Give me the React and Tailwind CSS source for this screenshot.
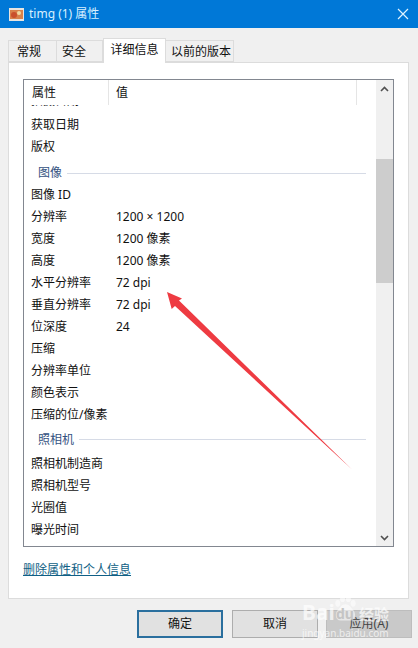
import React from "react";

const font = "font-['Noto_Sans','Noto_Sans_CJK_SC',sans-serif]";

const tabs = [
    { label: "常规", className: "w-[49px] pl-[8px] border-l" },
    { label: "安全", className: "w-[46px] pl-[5px]" },
    { label: "详细信息", w: "w-[63px]", active: true },
    { label: "以前的版本", className: "w-[68px] pl-[5px]" },
];

const rowsA = [
    ["获取日期"],
    ["版权"],
];
const rowsB = [
    ["图像 ID"],
    ["分辨率", "1200 × 1200"],
    ["宽度", "1200 像素"],
    ["高度", "1200 像素"],
    ["水平分辨率", "72 dpi"],
    ["垂直分辨率", "72 dpi"],
    ["位深度", "24"],
    ["压缩"],
    ["分辨率单位"],
    ["颜色表示"],
    ["压缩的位/像素"],
];
const rowsC = [
    ["照相机制造商"],
    ["照相机型号"],
    ["光圈值"],
    ["曝光时间"],
];

function Row({ name, value }) {
    return (
        <div className="flex h-[22px] items-center pl-[7px] text-[12px] leading-[16px] text-[#111]">
            <span className="w-[85px] whitespace-nowrap">{name}</span>
            <span className="whitespace-nowrap">{value}</span>
        </div>
    );
}

function Group({ label, className }) {
    return (
        <div className={`flex items-center pl-[14px] pr-[10px] text-[12px] leading-[16px] text-[#34527f] ${className}`}>
            <span className="whitespace-nowrap">{label}</span>
            <div className="ml-[5px] h-px flex-1 bg-[#d6dbe6]" />
        </div>
    );
}

export default function App() {
    return (
        <div className={`relative flex h-[648px] w-[418px] flex-col overflow-hidden bg-[#f0f0f0] ${font}`}>
            {/* title bar */}
            <div className="flex h-[28px] shrink-0 items-center bg-[#0078d7] pl-[9px] pr-[9px] text-white">
                <svg width="15" height="13" viewBox="0 0 15 13">
                    <rect width="15" height="13" fill="#e8e4e0" />
                    <rect x="1" y="2" width="13" height="9" fill="#d8814a" />
                    <circle cx="5" cy="7" r="3" fill="#c9502c" />
                    <circle cx="10" cy="5" r="2" fill="#f0d9a0" />
                </svg>
                <span className="ml-[5px] text-[12px] leading-[16px] text-[#d8f0ff]">timg (1) 属性</span>
                <svg className="ml-auto" width="12" height="12" viewBox="0 0 12 12">
                    <path d="M1 1l10 10M11 1L1 11" stroke="#dff3ff" strokeWidth="1.2" fill="none" />
                </svg>
            </div>

            {/* tabs */}
            <div className="flex h-[34px] shrink-0 items-end pl-[8px] text-[12px] leading-[16px] text-[#111]">
                {tabs.map((t) => (
                    <div
                        key={t.label}
                        className={
                            t.active
                                ? `${t.w} z-10 -mb-px flex h-[25px] items-start justify-center border-x border-t border-[#dcdcdc] bg-white pt-[3px]`
                                : `${t.className} flex h-[22px] items-center whitespace-nowrap border-y border-r border-[#dcdcdc] pt-[2px]`
                        }
                    >
                        {t.label}
                    </div>
                ))}
            </div>

            {/* panel */}
            <div className="ml-[8px] flex h-[537px] w-[401px] shrink-0 flex-col border border-[#dcdcdc] bg-white pl-[14px] pr-[14px] pt-[16px]">
                <div className="flex h-[468px] shrink-0 border border-[#828790] bg-white">
                    <div className="flex min-w-0 flex-1 flex-col overflow-hidden">
                        <div className="flex h-[25px] shrink-0 text-[12px] leading-[16px] text-[#111]">
                            <div className="flex w-[85px] items-center border-r border-[#e5e5e5] pl-[8px]">属性</div>
                            <div className="flex w-[248px] items-center border-r border-[#e5e5e5] pl-[7px]">值</div>
                        </div>
                        {/* row scrolled almost out of view under the header */}
                        <div className="h-[9px] shrink-0 overflow-hidden">
                            <div className="-mt-[15px]">
                                <Row name="拍摄日期" />
                            </div>
                        </div>
                        {rowsA.map(([n, v]) => <Row key={n} name={n} value={v} />)}
                        <Group label="图像" className="h-[26px] pt-[4px]" />
                        {rowsB.map(([n, v]) => <Row key={n} name={n} value={v} />)}
                        <Group label="照相机" className="h-[27px]" />
                        {rowsC.map(([n, v]) => <Row key={n} name={n} value={v} />)}
                    </div>

                    {/* scrollbar */}
                    <div className="flex w-[17px] shrink-0 flex-col bg-[#f0f0f0]">
                        <div className="flex h-[17px] items-center justify-center">
                            <svg width="9" height="6" viewBox="0 0 9 6">
                                <path d="M1 5l3.5-3.5L8 5" stroke="#505050" strokeWidth="1.6" fill="none" />
                            </svg>
                        </div>
                        <div className="mt-[62px] h-[124px] bg-[#cdcdcd]" />
                        <div className="mt-auto flex h-[17px] items-center justify-center">
                            <svg width="9" height="6" viewBox="0 0 9 6">
                                <path d="M1 1l3.5 3.5L8 1" stroke="#505050" strokeWidth="1.6" fill="none" />
                            </svg>
                        </div>
                    </div>
                </div>
                <div className="mt-[15px] text-[12px] leading-[16px]">
                    <span className="text-[#0f5f85] underline">删除属性和个人信息</span>
                </div>
            </div>

            {/* buttons */}
            <div className="flex flex-1 items-start justify-end gap-[9px] pr-[6px] pt-[11px] text-[12px] leading-[16px] text-[#111]">
                <div className="box-border flex h-[28px] w-[86px] items-center justify-center border-2 border-[#2a6f9e] bg-[#e1e1e1]">确定</div>
                <div className="box-border flex h-[28px] w-[86px] items-center justify-center border border-[#adadad] bg-[#e1e1e1]">取消</div>
                <div className="-ml-px box-border flex h-[28px] w-[86px] items-center justify-center border border-[#bdbdbd] bg-[#c9c9c9] text-[#444]">应用(A)</div>
            </div>

            {/* arrow annotation */}
            <svg className="absolute left-0 top-0" width="418" height="648" viewBox="0 0 418 648">
                <polygon points="167,292 182,298.5 179,300.5 352,469.5 175,306 171.7,309" fill="#ee3b42" />
            </svg>

            {/* watermark */}
            <div className="absolute left-[302px] top-[595px] w-[88px] text-white/70">
                <div className="flex h-[30px] items-end">
                    <span className="w-[30px] text-[21px] font-bold leading-[25px]">Bai</span>
                    <div className="relative h-[30px] w-[26px]">
                        <svg className="absolute left-0 top-0" width="26" height="30" viewBox="0 0 27 30">
                            <g fill="#ffffff" fillOpacity="0.55">
                                <ellipse cx="6" cy="8" rx="2.6" ry="3.5" />
                                <ellipse cx="11" cy="3.5" rx="2.6" ry="3.2" />
                                <ellipse cx="17" cy="3.5" rx="2.6" ry="3.2" />
                                <ellipse cx="22" cy="8" rx="2.6" ry="3.5" />
                                <path d="M14 9c4 0 5 3 8 6 3 3 3 11-3 11H9c-6 0-6-8-3-11 3-3 4-6 8-6z" />
                            </g>
                        </svg>
                        <span className="absolute bottom-[3px] left-[4px] text-[14px] font-bold leading-[16px] text-[#c4c4c4]">du</span>
                    </div>
                    <span className="ml-[1px] whitespace-nowrap text-[15px] font-bold leading-[22px]">经验</span>
                </div>
                <div className="mt-[2px] whitespace-nowrap text-[10px] leading-[12px]">jingyan.baidu.com</div>
            </div>
        </div>
    );
}
